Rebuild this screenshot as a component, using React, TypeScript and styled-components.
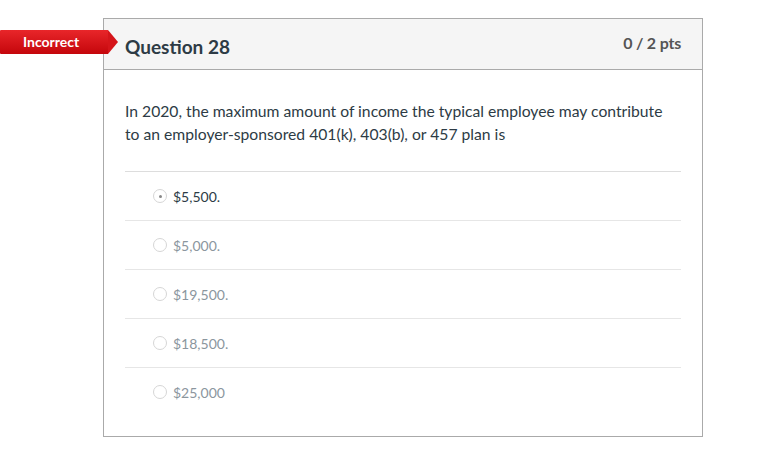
import React from 'react';
import styled, { createGlobalStyle } from 'styled-components';

const GlobalStyle = createGlobalStyle`
  body {
    margin: 0;
    background: #fff;
    font-family: Lato, "Open Sans", "Liberation Sans", sans-serif;
  }
`;

const Page = styled.div`
  position: relative;
  padding: 18px 0 0 103px;
`;

const Badge = styled.div`
  position: absolute;
  left: 0;
  top: 30px;
  height: 24px;
  width: 108px;
  background: linear-gradient(#e8262a, #c4060b);
  color: #fff;
  font-size: 14px;
  font-weight: 700;
  line-height: 24px;
  padding-left: 23px;
  box-sizing: border-box;
  border-radius: 1px 0 0 1px;

  &::after {
    content: '';
    position: absolute;
    right: -10px;
    top: 0;
    border-top: 12px solid transparent;
    border-bottom: 12px solid transparent;
    border-left: 10px solid #d5151a;
  }
`;

const Card = styled.div`
  width: 600px;
  box-sizing: border-box;
  border: 1px solid #aaa;
`;

const Header = styled.div`
  display: flex;
  align-items: center;
  justify-content: space-between;
  height: 51px;
  padding: 4px 21px 0 21px;
  box-sizing: border-box;
  background: #f5f5f5;
  border-bottom: 1px solid #aaa;
`;

const Title = styled.h2`
  margin: 0;
  font-size: 19px;
  font-weight: 700;
  color: #2d3b45;
`;

const Points = styled.div`
  font-size: 16px;
  font-weight: 700;
  color: #555;
  margin-top: -8px;
  letter-spacing: -0.2px;
`;

const Body = styled.div`
  padding: 30px 21px 20px 21px;
`;

const Text = styled.p`
  margin: 0;
  font-size: 15.7px;
  line-height: 23px;
  color: #2d3b45;
  padding: 0 15px 25px 0;
  border-bottom: 1px solid #ddd;
`;

const Option = styled.div<{ $last?: boolean }>`
  display: flex;
  align-items: center;
  gap: 6px;
  height: 48px;
  padding-left: 28px;
  border-bottom: ${(p) => (p.$last ? 'none' : '1px solid #e6e6e6')};
`;

const Radio = styled.span<{ $checked?: boolean }>`
  width: 12px;
  height: 12px;
  border-radius: 50%;
  border: 1px solid #d6d6d6;
  display: flex;
  align-items: center;
  justify-content: center;

  &::after {
    content: '';
    width: 3px;
    height: 3px;
    border-radius: 50%;
    background: ${(p) => (p.$checked ? '#888' : 'transparent')};
  }
`;

const Label = styled.span<{ $checked?: boolean }>`
  font-size: 14px;
  color: ${(p) => (p.$checked ? '#2d3b45' : '#8b969e')};
`;

const answers = ['$5,500.', '$5,000.', '$19,500.', '$18,500.', '$25,000'];

export default function App() {
  return (
    <Page>
      <GlobalStyle />
      <Badge>Incorrect</Badge>
      <Card>
        <Header>
          <Title>Question 28</Title>
          <Points>0 / 2 pts</Points>
        </Header>
        <Body>
          <Text>
            In 2020, the maximum amount of income the typical employee may contribute
            to an employer-sponsored 401(k), 403(b), or 457 plan is
          </Text>
          {answers.map((a, i) => (
            <Option key={a} $last={i === answers.length - 1}>
              <Radio $checked={i === 0} />
              <Label $checked={i === 0}>{a}</Label>
            </Option>
          ))}
        </Body>
      </Card>
    </Page>
  );
}
